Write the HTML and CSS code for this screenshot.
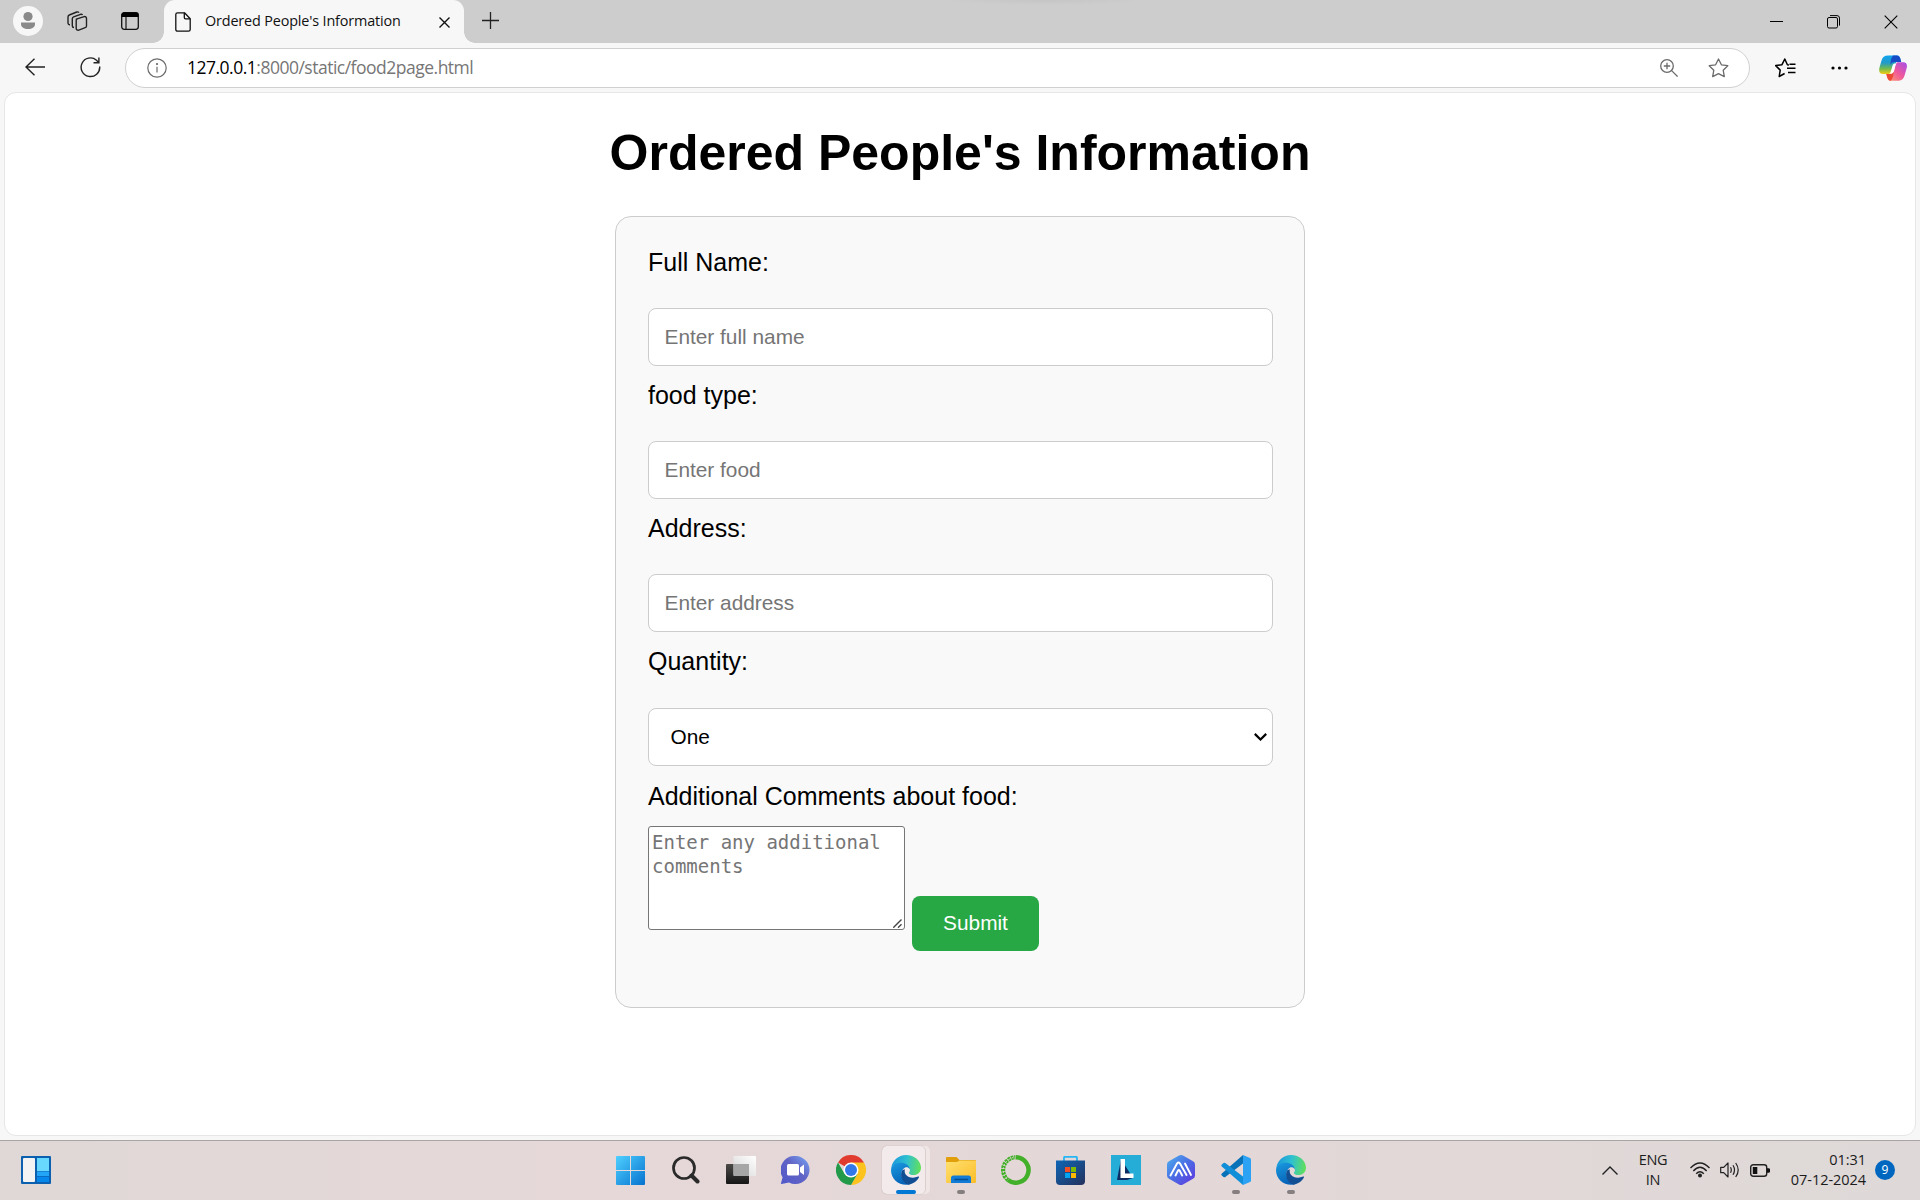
FILE: index.html
```html
<!DOCTYPE html>
<html lang="en">
<head>
<meta charset="utf-8">
<title>Ordered People's Information</title>
<link rel="stylesheet" href="styles.css">
</head>
<body>
<svg width="0" height="0" class="defs" aria-hidden="true">
  <defs>
    <linearGradient id="edgeTop" x1="0" y1=".4" x2="1" y2=".5"><stop offset="0" stop-color="#1b97dc"/><stop offset=".5" stop-color="#2fc0d0"/><stop offset="1" stop-color="#62e05a"/></linearGradient>
    <linearGradient id="edgeLow" x1="0" y1="0" x2=".4" y2="1"><stop offset="0" stop-color="#1a9be0"/><stop offset="1" stop-color="#0763b8"/></linearGradient>
    <symbol id="edge" viewBox="0 0 30 30">
      <path d="M.3 13.500C1 5.500 7.500 0 15 0c8.500 0 15 6 15 12.700 0 4.300-3.400 7.400-7.300 7.400-2.800 0-4.800-.9-4.800-2.100 0-.8 1-1.200 1-3.100 0-2.500-2.800-4.900-6.400-4.900C7.500 8 3 9 .3 13.500z" fill="url(#edgeTop)"/>
      <path d="M0 15C.3 10.500 4.800 7.800 9.700 7.800c4.800 0 8.700 2.600 9.100 6.400-1.300-2.200-3.400-2.500-4.700-1.600C9.500 15 9 22 13.500 26c1.500 1.400 4 2.700 6.300 3.100C10 32 0 25.500 0 15z" fill="url(#edgeLow)"/>
      <path d="M11.300 15.300C8.300 20 11 27.500 17.500 29.800c4.500-.8 8.500-3.600 10.500-7.500.3-.7-.2-1-.8-.7-4.700 2.100-9.800 1.200-12.300-1.800-1.200-1.500-1.500-3.400-1-5.500z" fill="#124e94"/>
    </symbol>
    <linearGradient id="winG" x1="0" y1="0" x2="1" y2="1"><stop offset="0" stop-color="#4fd0ff"/><stop offset="1" stop-color="#0672cf"/></linearGradient>
    <linearGradient id="tvA" x1="0" y1="0" x2="0" y2="1"><stop offset="0" stop-color="#4c4a49"/><stop offset="1" stop-color="#161616"/></linearGradient>
    <linearGradient id="tvB" x1="1" y1="0" x2="0" y2="1"><stop offset="0" stop-color="#fff"/><stop offset="1" stop-color="#d5d5d5"/></linearGradient>
    <linearGradient id="chatG" x1="1" y1="0" x2="0" y2="1"><stop offset="0" stop-color="#76a7f5"/><stop offset=".45" stop-color="#6264c6"/><stop offset="1" stop-color="#5059c9"/></linearGradient>
    <linearGradient id="foldG" x1="0" y1="0" x2="1" y2="1"><stop offset="0" stop-color="#ffe070"/><stop offset="1" stop-color="#fbbd28"/></linearGradient>
    <linearGradient id="storeG" x1="0" y1="0" x2="1" y2="1"><stop offset="0" stop-color="#0f66b6"/><stop offset="1" stop-color="#24315c"/></linearGradient>
    <linearGradient id="hexG" x1="0" y1="0" x2="1" y2="1"><stop offset="0" stop-color="#4bb1ee"/><stop offset=".5" stop-color="#4a6be4"/><stop offset="1" stop-color="#6436df"/></linearGradient>
    <linearGradient id="copL" x1="0" y1="0" x2="0" y2="1"><stop offset="0" stop-color="#10a4f2"/><stop offset=".4" stop-color="#229bc7"/><stop offset=".7" stop-color="#6fba50"/><stop offset="1" stop-color="#f4cb15"/></linearGradient>
    <linearGradient id="copR" x1="1" y1="0" x2="0" y2="1"><stop offset="0" stop-color="#a44eea"/><stop offset=".5" stop-color="#f0589b"/><stop offset="1" stop-color="#ffa06b"/></linearGradient>
  </defs>
</svg>

<header class="tabstrip">
  <div class="strip-tools">
    <svg class="avatar" width="30" height="30" viewBox="0 0 30 30"><circle cx="15" cy="15" r="15" fill="#f7f7f7"/><circle cx="15" cy="10.500" r="4.600" fill="#8a8a8a"/><path d="M8 16.500h14v1.500c0 3.500-3 5-7 5s-7-1.500-7-5z" fill="#8a8a8a"/></svg>
    <svg class="workspaces" width="22" height="22" viewBox="0 0 22 22" fill="none" stroke="#222" stroke-width="1.400" stroke-linejoin="round"><path d="M10.300 9.200l7.800-2.600c1.200-.4 2.400.4 2.400 1.700v7.600c0 .8-.5 1.500-1.300 1.800l-6.400 2.400c-1.300.4-2.600-.4-2.600-1.700V10.500c0-.6.2-1 .7-1.300z"/><path d="M8 17.500c-1 0-1.700-.7-1.700-1.800V8.800c0-.9.500-1.600 1.300-1.900l7-2.600c.8-.2 1.500 0 2 .6"/><path d="M4 14.700c-1.300 0-2-.8-2-2V7c0-1 .5-1.700 1.300-2L10.800 2c.8-.3 1.700 0 2.200.6"/></svg>
    <svg class="vtabs" width="18" height="18" viewBox="0 0 18 18"><rect x=".7" y=".7" width="16.600" height="16.600" rx="2.500" fill="none" stroke="#111" stroke-width="1.300"/><path d="M.5 5V3Q.5.500 3 .5h12q2.500 0 2.500 2.500v2z"/><path d="M5 5v12" stroke="#111" stroke-width="1.200"/></svg>
  </div>
  <div class="tab">
    <svg class="page-icon" width="16" height="20" viewBox="0 0 16 20" fill="none" stroke="#111" stroke-width="1.300" stroke-linejoin="round"><path d="M.8 2.500C.8 1.500 1.500.8 2.500.8h7l5.700 6v10.700c0 1-.7 1.700-1.700 1.700h-11c-1 0-1.700-.7-1.700-1.700z"/><path d="M9.300.8v4.700c0 .8.500 1.300 1.300 1.300h4.600"/></svg>
    <span class="tab-title">Ordered People's Information</span>
    <svg class="tab-close" width="11" height="11" viewBox="0 0 11 11" stroke="#111" stroke-width="1.400"><path d="M.5.500l10 10M10.500.500l-10 10"/></svg>
  </div>
  <svg class="new-tab" width="18" height="18" viewBox="0 0 18 18" stroke="#222" stroke-width="1.300"><path d="M8.500 0v17M0 8.500h17"/></svg>
  <div class="window-buttons">
    <svg width="13" height="13" viewBox="0 0 13 13" stroke="#000" stroke-width="1"><path d="M0 6.500h13"/></svg>
    <svg width="13" height="14" viewBox="0 0 13 14" fill="none" stroke="#000"><rect x=".5" y="2.500" width="10" height="10.500" rx="1.500"/><path d="M3 .6h7q2.500 0 2.500 2.500v7.500"/></svg>
    <svg width="14" height="14" viewBox="0 0 14 14" stroke="#000" stroke-width="1.100"><path d="M.7.700l12.600 12.600M13.300.700L.7 13.300"/></svg>
  </div>
</header>

<nav class="toolbar">
  <svg class="back" width="20" height="18" viewBox="0 0 20 18" fill="none" stroke="#222" stroke-width="1.400"><path d="M20 9H1M9.500.7L1 9l8.500 8.300"/></svg>
  <svg class="reload" width="21" height="21" viewBox="0 0 21 21" fill="none" stroke="#222" stroke-width="1.400"><path d="M19.700 9.500A9.300 9.300 0 1 1 16.500 3.200l2.200 2.200M18.900.5v5.300h-5.400"/></svg>
  <div class="address">
    <svg width="20" height="20" viewBox="0 0 20 20" fill="none" stroke="#6b6b6b" stroke-width="1.200"><circle cx="10" cy="10" r="9.200"/><path d="M10 8.800v5.700"/><circle cx="10" cy="6" r=".5" fill="#6b6b6b"/></svg>
    <span class="url"><b>127.0.0.1</b>:8000/static/food2page.html</span>
    <svg class="zoom" width="18" height="18" viewBox="0 0 18 18" fill="none" stroke="#6b6b6b" stroke-width="1.300"><circle cx="7" cy="7" r="6.300"/><path d="M11.600 11.600l6 6M7 3.800v6.400M3.800 7h6.400"/></svg>
    <svg class="star" width="21" height="20" viewBox="0 0 21 20" fill="none" stroke="#6b6b6b" stroke-width="1.300" stroke-linejoin="round"><path d="M10.500 1l2.900 5.800 6.400.9-4.600 4.500 1.100 6.400-5.800-3-5.800 3 1.100-6.400L1.200 7.700l6.400-.9z"/></svg>
  </div>
  <svg class="favs" width="21" height="20" viewBox="0 0 21 20" fill="none" stroke="#000" stroke-width="1.500" stroke-linejoin="round"><path d="M14 6.900l-1.600-.2L9.800 1 7 6.700l-6.300.9 4.500 4.500-1 6.400L9.600 15.500M12 10.300h8.500M13 14.500h7.500M14.500 6.300h6"/></svg>
  <svg class="more" width="17" height="4" viewBox="0 0 17 4"><circle cx="2" cy="2" r="1.600"/><circle cx="8.500" cy="2" r="1.600"/><circle cx="15" cy="2" r="1.600"/></svg>
  <svg class="copilot" width="28" height="26" viewBox="0 0 28 26"><path d="M9 .5h9c2 0 2.800 1.500 3.300 3l.9 3.500h-5L14 16l-2 3H4c-3.500 0-4.500-3-3.500-6.500l2-7C3.500 2 5.500.5 9 .5z" fill="url(#copL)"/><path d="M14 .5h4c2 0 2.800 1.500 3.300 3l.9 3.500h-6.500C13.500 7 12 8 11.500 10c0-4 .5-7 2.500-9.500z" fill="#174bc5"/><path d="M18.500 7.300h5.700c3.300 0 4.300 2.500 3.500 5.700l-2 7c-1 3.700-3 5.700-6 5.700h-8c-2.500 0-3.200-2-3.700-4L7.300 19H11c2.300 0 3.300-1 4-3l1.500-6c.5-1.700 1-2.500 2-2.700z" fill="url(#copR)"/><path d="M7.300 19H11c2 0 3-.7 3.800-2.500-.3 4-1 7-3.100 9.200-2.200 0-3-1.700-3.700-4z" fill="#ec4a35"/><path d="M15.500 8.500h2.300c-1 .7-1.300 1.500-1.700 3L15 15.500c-.7 2.300-1.700 3.200-3.700 3.200H10c1-.5 1.500-1.500 2-3l1.500-5c.4-1.300 1-2 2-2.200z" fill="#fff"/></svg>
</nav>

<main class="viewport">
  <h1>Ordered People's Information</h1>
  <form class="order-form">
    <label for="name">Full Name:</label>
    <input class="field" id="name" type="text" placeholder="Enter full name">
    <label for="food">food type:</label>
    <input class="field" id="food" type="text" placeholder="Enter food">
    <label for="address">Address:</label>
    <input class="field" id="address" type="text" placeholder="Enter address">
    <label class="quantity-label" for="quantity">Quantity:</label>
    <div class="field select" id="quantity"><span>One</span><svg width="13" height="8" viewBox="0 0 13 8" fill="none" stroke="#000" stroke-width="2.200"><path d="M.8.900l5.700 5.600L12.200.900"/></svg></div>
    <label class="comments-label" for="comments">Additional Comments about food:</label>
    <div class="actions">
      <div class="comments-box">
        <textarea id="comments" placeholder="Enter any additional comments"></textarea>
        <svg class="grip" width="9" height="9" viewBox="0 0 9 9" stroke="#444" stroke-width="1.400"><path d="M.3 8.700L8.500.500M5 8.700L8.500 5.200"/></svg>
      </div>
      <button type="button">Submit</button>
    </div>
  </form>
</main>

<footer class="taskbar">
  <svg class="widgets" width="30" height="28" viewBox="0 0 30 28"><rect width="30" height="28" rx="1" fill="#0c60b0"/><rect x="2" y="2" width="12" height="24" rx="1" fill="#f3f3f3"/><rect x="16" y="2" width="12" height="13" fill="#69d8ff"/><rect x="16" y="15.500" width="12" height="4.500" fill="#22a5f7"/><rect x="16" y="20.700" width="12" height="5.300" fill="#0587ec"/></svg>
  <div class="apps">
    <div class="app"><svg width="29" height="29" viewBox="0 0 29 29"><path d="M0 1Q0 0 1 0h13v14H0zM15 0h13q1 0 1 1v13H15zM0 15h14v14H1q-1 0-1-1zM15 15h14v13q0 1-1 1H15z" fill="url(#winG)"/></svg></div>
    <div class="app"><svg width="28" height="28" viewBox="0 0 28 28" fill="none" stroke="#2a2a2a"><circle cx="12" cy="12" r="10.500" stroke-width="2.700"/><path d="M19.500 19.500l6 6" stroke-width="4" stroke-linecap="round"/></svg></div>
    <div class="app"><svg width="30" height="28" viewBox="0 0 30 28"><rect y="8" width="23" height="20" rx="1" fill="url(#tvA)"/><rect x="7.500" width="22.500" height="20" rx="1" fill="url(#tvB)"/><path d="M7.500 8H23v12H8.500q-1 0-1-1z" fill="#a6a6a6"/></svg></div>
    <div class="app"><svg width="29" height="28" viewBox="0 0 29 28"><path d="M14.500 0A14 14 0 1 1 8 26.400L.5 28c-.5 0-.7-.3-.5-.8l1.600-6A14 14 0 0 1 14.500 0z" fill="url(#chatG)"/><rect x="6" y="8" width="12" height="11.500" rx="1.500" fill="#fff"/><path d="M19 11.500L23 8.500v10.500l-4-3z" fill="#fff"/></svg></div>
    <div class="app"><svg width="30" height="30" viewBox="0 0 30 30"><path d="M15 15L2 7.500A15 15 0 0 1 28 7.500z" fill="#e03b2e"/><path d="M28 7.500A15 15 0 0 1 15 30l6.500-11.200L15 7.500z" fill="#fcc31e"/><path d="M2 7.500A15 15 0 0 0 15 30l6.500-11.200H8.500z" fill="#23994a"/><circle cx="15" cy="15" r="7.500" fill="#fff"/><circle cx="15" cy="15" r="6" fill="#3278e8"/></svg></div>
    <div class="app active"><svg width="30" height="30"><use href="#edge"/></svg></div>
    <div class="app running"><svg width="30" height="26" viewBox="0 0 30 26"><path d="M0 1q0-1 1-1h9.500l3 3H29q1 0 1 1v5H0z" fill="#e09f0b"/><path d="M0 5h11l2.500-1.500H30V25q0 1-1 1H1q-1 0-1-1z" fill="url(#foldG)"/><path d="M5 26v-5q0-2.500 2.500-2.500h15Q25 18.500 25 21v5z" fill="#117bd5"/><path d="M9 22.500h12.500" stroke="#064e8f" stroke-width="1.500" stroke-linecap="round"/></svg></div>
    <div class="app"><svg width="30" height="30" viewBox="0 0 30 30" fill="none" stroke="#43b02a"><path d="M15 2.300A12.700 12.700 0 1 1 7 25" stroke-width="4.500"/><path d="M7 25A12.700 12.700 0 0 1 14.500 2.300" stroke-width="4.200" stroke-dasharray="2.600 .7"/><path d="M6 24A12.700 12.700 0 0 1 13 2.400" stroke="#e5d8d8" stroke-width="1" stroke-dasharray="1.600 2"/></svg></div>
    <div class="app"><svg width="29" height="29" viewBox="0 0 29 29"><path d="M8 6V1.800q0-1 1-1h11q1 0 1 1V6" fill="none" stroke="#27b6f4" stroke-width="1.800"/><path d="M0 4.500h29V25q0 4-4 4H4q-4 0-4-4z" fill="url(#storeG)"/><path d="M9 11h5v5H9z" fill="#f25022"/><path d="M15 11h5v5h-5z" fill="#7fba00"/><path d="M9 17h5v5H9z" fill="#00a4ef"/><path d="M15 17h5v5h-5z" fill="#ffb900"/></svg></div>
    <div class="app"><svg width="30" height="30" viewBox="0 0 30 30"><path d="M0 0h30v30H0z" fill="#25add8"/><path d="M10 4L6 25h10l6-2z" fill="#0d2c64"/><path d="M9.500 4H14v14.500h8.500V23h-13z" fill="#fff"/></svg></div>
    <div class="app"><svg width="28" height="30" viewBox="0 0 28 30"><path d="M12 .6q2-1 4 0l10 5.600q2 1.100 2 3.300v11q0 2.200-2 3.300l-10 5.600q-2 1-4 0L2 23.800q-2-1.100-2-3.300v-11q0-2.200 2-3.300z" fill="url(#hexG)"/><path d="M3.500 20.500L10 8.500q1.500-2 3 0L19.500 20M8.500 20.500l2.500-5q.8-1 1.600 0l2.600 5M18 8.500l6 11.500" fill="none" stroke="#fff" stroke-width="1.900" stroke-linecap="round"/></svg></div>
    <div class="app running"><svg width="30" height="30" viewBox="0 0 30 30"><path d="M22 0L.8 18.500q-1 1 0 2l1.700 1.500q.8.600 1.800 0L22 8.500z" fill="#0872b9"/><path d="M22 30L.8 11.500q-1-1 0-2L2.500 8q.8-.6 1.800 0L22 21.500z" fill="#118ed8"/><path d="M22 0l7 3q1 .5 1 1.500v21q0 1-1 1.500l-7 3z" fill="#2ba2f3"/></svg></div>
    <div class="app running"><svg width="30" height="30"><use href="#edge"/></svg></div>
  </div>
  <div class="tray">
    <svg class="chevron" width="16" height="9" viewBox="0 0 16 9" fill="none" stroke="#222" stroke-width="1.400"><path d="M.5 8.500L8 1l7.500 7.500"/></svg>
    <div class="lang"><span>ENG</span><span>IN</span></div>
    <svg class="wifi" width="20" height="16" viewBox="0 0 20 16" fill="none" stroke="#222" stroke-width="1.400"><path d="M.5 6Q10-4 19.500 6M3.300 9Q10 1.500 16.700 9M6.200 11.800q3.800-4 7.600 0"/><circle cx="10" cy="13.500" r="1.300" fill="#222"/></svg>
    <svg class="volume" width="20" height="16" viewBox="0 0 20 16" fill="none" stroke="#222" stroke-width="1.200"><path d="M.7 5.300h3L8 1v14l-4.300-4.300h-3z" stroke-linejoin="round"/><path d="M10.500 5.300q1.600 2.700 0 5.400M13 3.200q3 4.800 0 9.600M15.700 1q5 7 0 14"/></svg>
    <svg class="battery" width="20" height="13" viewBox="0 0 20 13"><rect x=".7" y=".7" width="16" height="11.600" rx="2.500" fill="none" stroke="#222" stroke-width="1.400"/><path d="M2.800 3h4.500v7H2.800zM17 4.300h1.500q1.500 0 1.500 1v2.400q0 1-1.500 1H17z" fill="#111"/></svg>
    <div class="clock"><span>01:31</span><span>07-12-2024</span></div>
    <span class="badge">9</span>
  </div>
</footer>
</body>
</html>
```
FILE: styles.css
```css
* { box-sizing: border-box; }

body {
  margin: 0;
  width: 1920px;
  height: 1200px;
  overflow: hidden;
  display: flex;
  flex-direction: column;
  background: #f7f7f7;
  font-family: "Open Sans", "Noto Sans", sans-serif;
}

svg { display: block; flex: none; }
.defs { position: absolute; }

/* Tab strip */
.tabstrip {
  height: 43px;
  flex: none;
  display: flex;
  background:
    radial-gradient(ellipse 100px 5px at 1046px 0, #c5c5c5, #cdcdcd) no-repeat,
    #cdcdcd;
}
.strip-tools {
  width: 164px;
  flex: none;
  display: flex;
  align-items: center;
  padding-left: 13px;
}
.avatar { margin-top: -1px; }
.workspaces { margin: -2px 0 0 23px; }
.vtabs { margin-left: 33px; margin-top: -1px; }
.tab {
  position: relative;
  width: 300px;
  display: flex;
  align-items: center;
  padding: 0 14px 0 11px;
  background: #f7f7f7;
  border-radius: 11px 11px 0 0;
}
.tab::before,
.tab::after {
  content: "";
  position: absolute;
  bottom: 0;
  width: 11px;
  height: 11px;
}
.tab::before {
  left: -11px;
  background: radial-gradient(circle at 0 0, transparent 10.5px, #f7f7f7 11px);
}
.tab::after {
  right: -11px;
  background: radial-gradient(circle at 100% 0, transparent 10.5px, #f7f7f7 11px);
}
.tab-title {
  flex: 1;
  margin: -3px 0 0 14px;
  font-size: 14.4px;
  letter-spacing: -0.15px;
  white-space: nowrap;
  color: #111;
}
.tab-close { margin-top: 1px; }
.new-tab { margin: 12px 0 0 18px; }
.window-buttons {
  margin-left: auto;
  display: flex;
  align-items: center;
  gap: 44px;
  padding-right: 22px;
}

/* Toolbar */
.toolbar {
  height: 49px;
  flex: none;
  display: flex;
  align-items: center;
  padding-left: 25px;
}
.back { margin-top: -1px; }
.reload { margin-left: 35px; }
.address {
  width: 1625px;
  height: 40px;
  margin-left: 24px;
  display: flex;
  align-items: center;
  padding: 0 20px 0 21px;
  background: #fff;
  border: 1px solid #d0d0d0;
  border-radius: 20px;
}
.url {
  margin: -2px auto 0 20px;
  font-size: 17.5px;
  letter-spacing: -0.5px;
  color: #767676;
}
.url b { font-weight: 400; color: #000; }
.star { margin-left: 30px; }
.favs { margin-left: 25px; }
.more { margin-left: 35px; }
.copilot { margin-left: 31px; }

/* Page */
.viewport {
  width: 1912px;
  height: 1044px;
  flex: none;
  margin: 0 0 0 4px;
  padding-top: 32px;
  background: #fff;
  border: 1px solid #e6e6e6;
  border-radius: 12px;
  font-family: "Liberation Sans", Arial, sans-serif;
  font-size: 25px;
  color: #000;
}
h1 {
  margin: 0;
  text-align: center;
  font-size: 50px;
  line-height: 56px;
}
.order-form {
  width: 690px;
  height: 792px;
  margin: 35px auto 0;
  padding: 31px 31px 31px 32px;
  background: #f9f9f9;
  border: 1px solid #ccc;
  border-radius: 16px;
}
label {
  display: block;
  height: 60px;
  line-height: 28px;
}
.field {
  display: flex;
  align-items: center;
  width: 625px;
  height: 58px;
  margin-bottom: 15.1px;
  padding: 0 15.5px;
  background: #fff;
  border: 1px solid #ccc;
  border-radius: 8px;
  font: 20.83px "Liberation Sans", Arial, sans-serif;
}
.field::placeholder,
textarea::placeholder { color: #757575; opacity: 1; }
.quantity-label { height: 61px; }
.select {
  justify-content: space-between;
  margin-bottom: 16px;
  padding: 0 5.5px 0 21.5px;
}
.comments-label { height: 44px; }
.actions {
  display: flex;
  align-items: flex-start;
  gap: 7px;
}
.comments-box {
  position: relative;
  width: 257px;
  height: 104px;
}
textarea {
  display: block;
  width: 100%;
  height: 100%;
  padding: 3px;
  border: 1px solid #767676;
  border-radius: 3px;
  background: #fff;
  font: 19px/24px "DejaVu Sans Mono", monospace;
  overflow: hidden;
  resize: none;
}
.grip {
  position: absolute;
  right: 3px;
  bottom: 2px;
}
button {
  width: 127px;
  height: 55px;
  margin-top: 70px;
  padding: 0 0 1px;
  border: 0;
  border-radius: 8px;
  background: #28a745;
  color: #fff;
  font: 20.83px "Liberation Sans", Arial, sans-serif;
}

/* Taskbar */
.taskbar {
  height: 60px;
  margin-top: auto;
  flex: none;
  display: grid;
  grid-template-columns: 603px 715px 1fr;
  align-items: center;
  padding-bottom: 1px;
  border-top: 1px solid #aaa5a5;
  background: linear-gradient(90deg, #dfd8d7, #e6d8d8 30%, #e4d7d7 60%, #ded9d8);
}
.widgets { margin-left: 21px; }
.apps { display: flex; }
.app {
  position: relative;
  width: 55px;
  height: 48px;
  display: flex;
  align-items: center;
  justify-content: center;
}
.active::before {
  content: "";
  position: absolute;
  inset: 0 8px 0 4px;
  border-radius: 5px;
  background: #f3ebeb;
  box-shadow: 1px 0 0 #d9cfcf, 5px 0 0 #f0e6e6, 0 0 1px #a99;
}
.active svg { position: relative; }
.running::after,
.active::after {
  content: "";
  position: absolute;
  bottom: 0;
  width: 8px;
  height: 4px;
  border-radius: 2px;
  background: #857f7f;
}
.active::after { width: 20px; background: #0078d4; }
.tray {
  display: flex;
  align-items: center;
  justify-content: flex-end;
  padding-right: 25px;
  color: #1c1c1c;
  font-size: 14.5px;
  line-height: 20px;
}
.lang,
.clock { display: flex; flex-direction: column; margin-top: -1px; }
.lang { width: 30px; align-items: center; margin-left: 20px; letter-spacing: -0.3px; }
.wifi { margin-left: 22px; }
.volume { margin-left: 10px; }
.battery { margin-left: 10px; }
.clock { width: 77px; align-items: flex-end; margin-left: 19px; letter-spacing: -0.05px; white-space: nowrap; }
.badge {
  width: 20px;
  height: 20px;
  margin-left: 9px;
  border-radius: 50%;
  background: #0067c0;
  color: #fff;
  font-size: 12px;
  line-height: 19px;
  text-align: center;
}
```
